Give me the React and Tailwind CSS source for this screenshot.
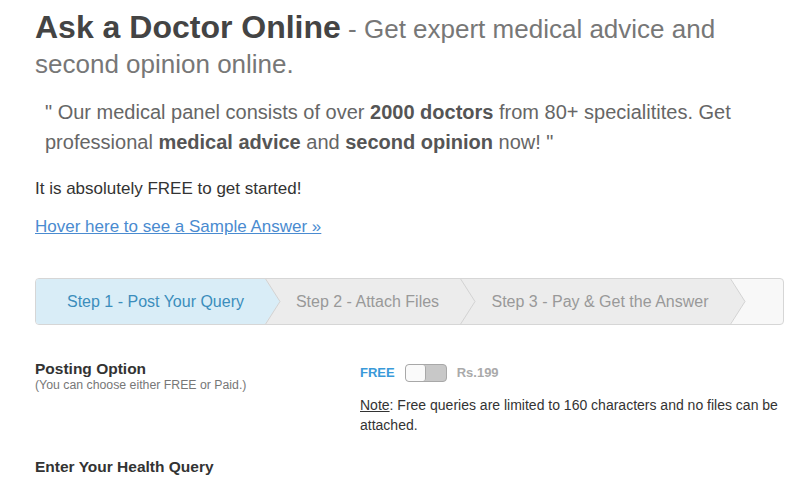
import React from 'react';

const steps = [
  { label: 'Step 1 - Post Your Query', width: 'w-[229px]', active: true },
  { label: 'Step 2 - Attach Files', width: 'w-[195px]', active: false },
  { label: 'Step 3 - Pay & Get the Answer', width: 'w-[270px]', active: false }
];

const Arrow = ({ fill }) => (
  <svg className="absolute left-full top-0 z-10" width="16" height="45" viewBox="0 0 16 45">
    <polygon points="0,0 15,22.5 0,45" fill={fill} />
    <polyline points="0,-1 15,22.5 0,46" fill="none" stroke="#d2d2d2" strokeWidth="1" />
  </svg>
);

const App = () => {
  return (
    <div className="min-h-screen bg-white pl-[35px] pr-[24px] pt-[10px] font-['Liberation_Sans',Arial,sans-serif]">
      {/* Heading */}
      <h1 className="text-[26px] leading-[35px] text-[#777]">
        <span className="text-[32px] font-bold text-[#444]">Ask a Doctor Online</span> - Get expert medical advice and second opinion online.
      </h1>

      <p className="mt-[15px] pl-[10px] text-[20px] leading-[30px] text-[#666]">
        " Our medical panel consists of over <b className="text-[#555]">2000 doctors</b> from 80+ specialitites. Get professional{' '}
        <b className="text-[#555]">medical advice</b> and <b className="text-[#555]">second opinion</b> now! "
      </p>

      <p className="mt-[21px] text-[17px] leading-[22px] text-[#333]">It is absolutely FREE to get started!</p>

      <a href="#" className="mt-[16px] block w-fit text-[17px] leading-[22px] text-[#4a8bd0] underline">
        Hover here to see a Sample Answer »
      </a>

      {/* Steps */}
      <div className="mt-[40px] flex h-[47px] rounded-[4px] border border-[#d6d6d6] bg-[#f8f8f8] overflow-hidden">
        {steps.map((step, i) => (
          <div
            key={i}
            className={`relative flex shrink-0 items-center justify-center pl-[10px] pt-[1px] text-[16px] ${step.width} ${
              step.active ? 'bg-[#d9edf7] text-[#3c8dbc]' : 'bg-[#ececec] text-[#999]'
            } ${i === 0 ? 'z-[3]' : i === 1 ? 'z-[2]' : 'z-[1]'}`}
          >
            {step.label}
            <Arrow fill={step.active ? '#d9edf7' : '#ececec'} />
          </div>
        ))}
      </div>

      {/* Posting option */}
      <div className="mt-[35px] flex">
        <div className="w-[325px] shrink-0">
          <div className="text-[15.5px] font-bold leading-[18px] text-[#333]">Posting Option</div>
          <div className="text-[12.3px] leading-[14px] text-[#777]">(You can choose either FREE or Paid.)</div>
        </div>
        <div className="pt-[3px]">
          <div className="flex items-center text-[13px] font-bold">
            <span className="text-[#3a9ad9]">FREE</span>
            <div className="ml-[10px] flex h-[18px] w-[42px] rounded-[4px] border border-[#a8a8a8] bg-[#c8c8c8] overflow-hidden">
              <div className="h-full w-[20px] rounded-[3px] border-r border-[#a8a8a8] bg-[#fafafa]"></div>
            </div>
            <span className="ml-[10px] text-[#aaa]">Rs.199</span>
          </div>
          <p className="mt-[12px] text-[14px] leading-[20px] text-[#333]">
            <span className="underline">Note</span>: Free queries are limited to 160 characters and no files can be attached.
          </p>
        </div>
      </div>

      <div className="mt-[23px] text-[15.5px] font-bold leading-[18px] text-[#333]">Enter Your Health Query</div>
    </div>
  );
};

export default App;
